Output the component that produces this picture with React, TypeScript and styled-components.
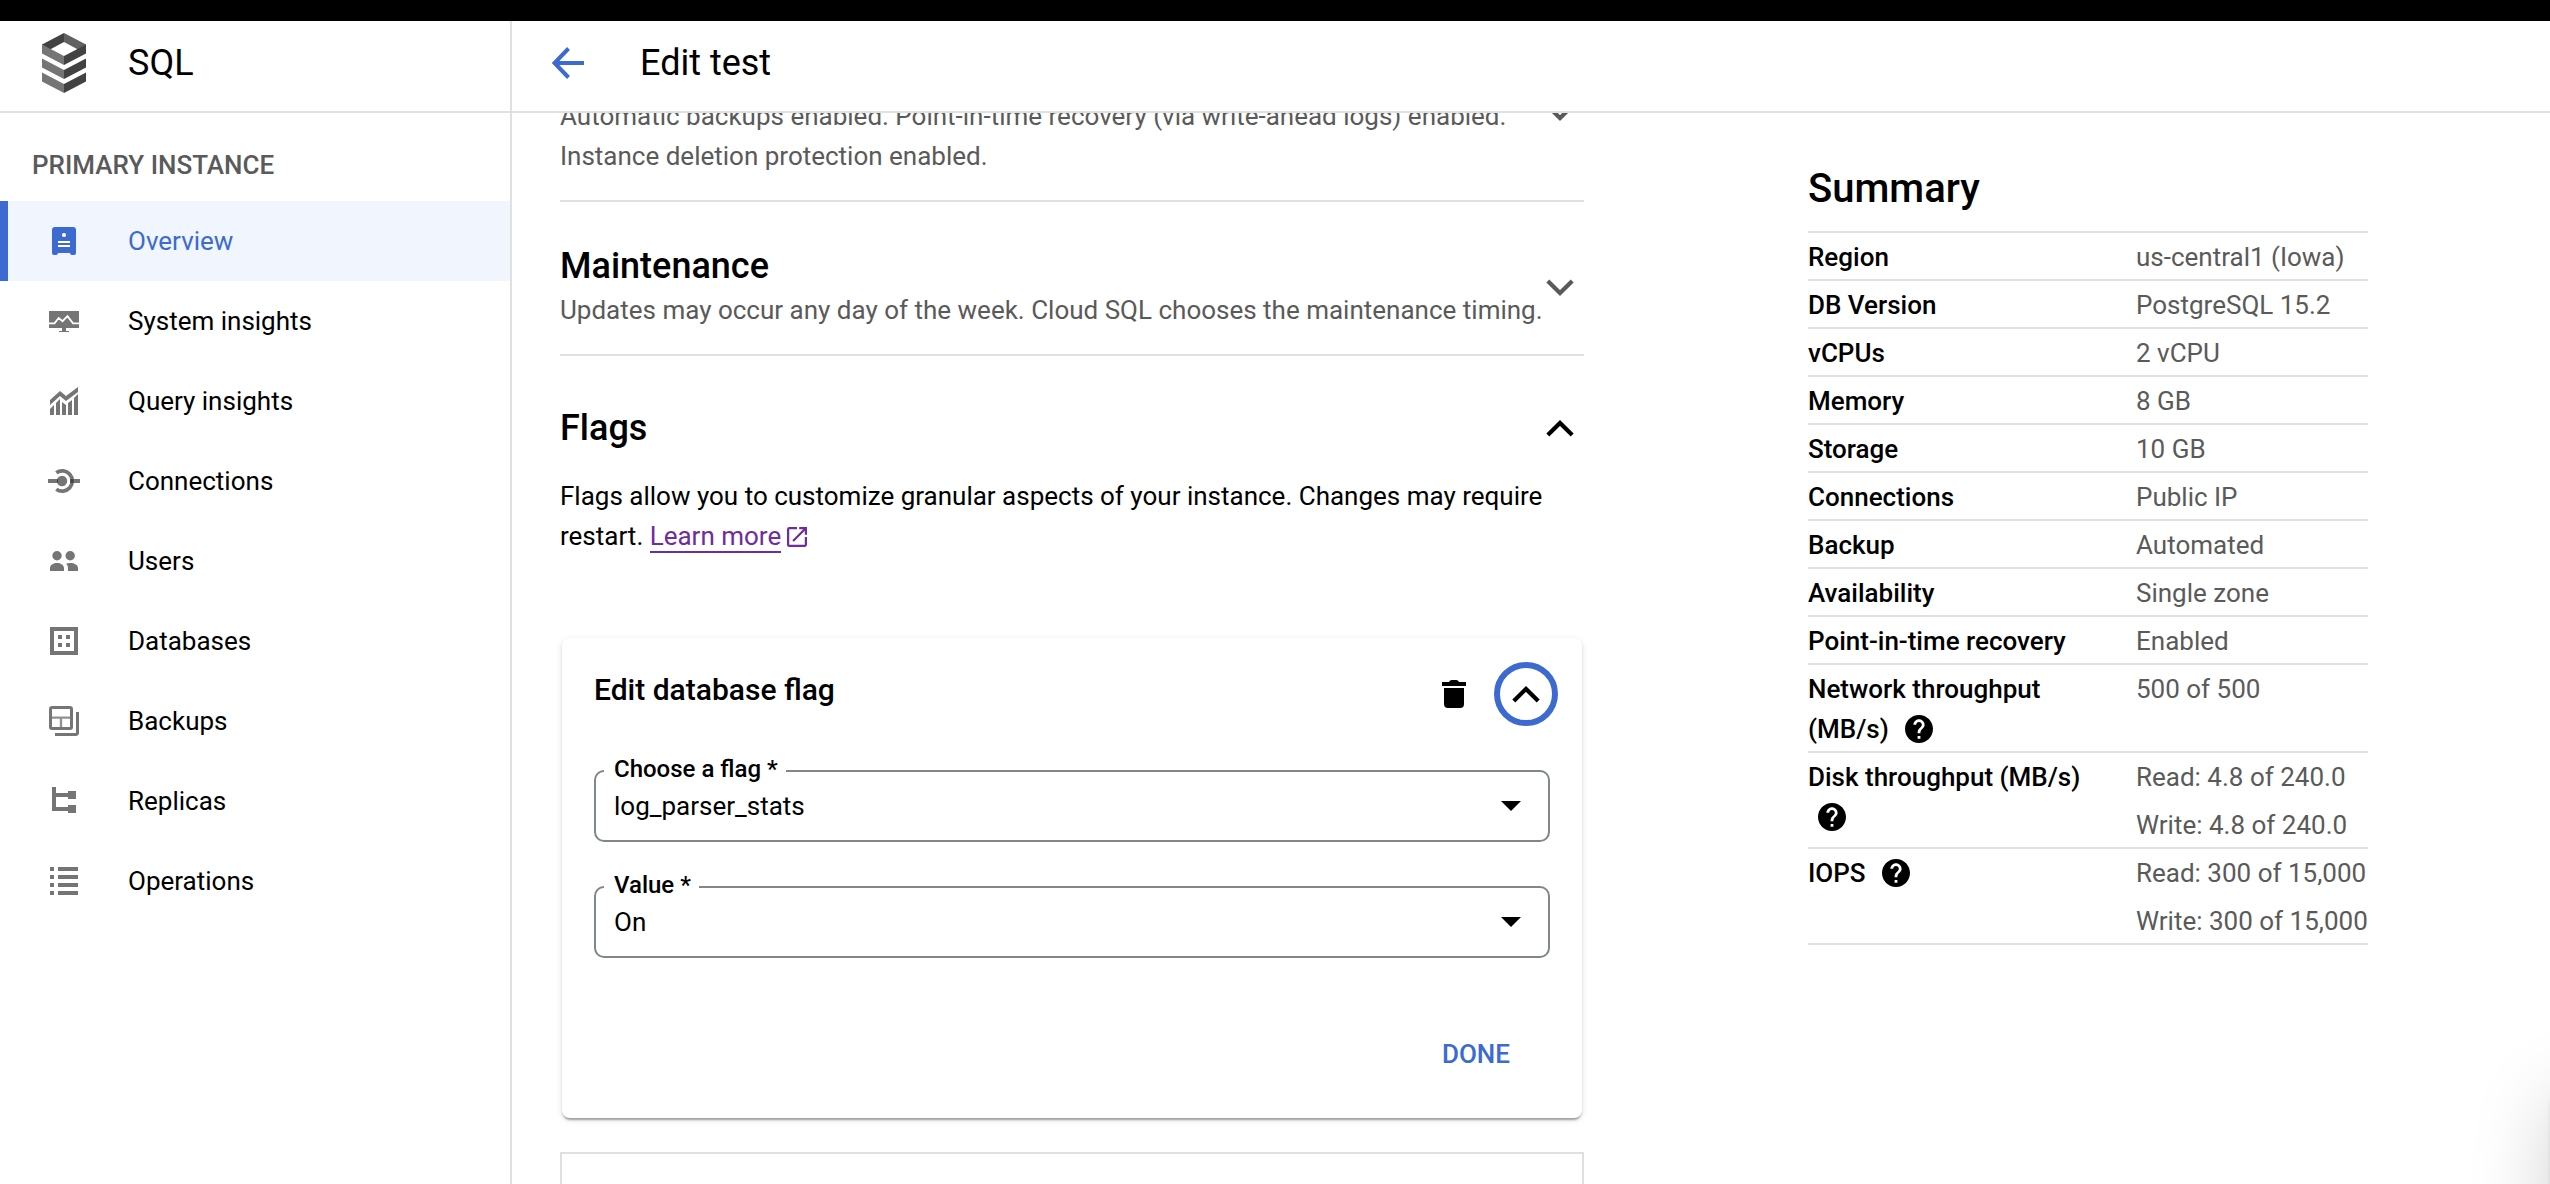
import React from "react";
import styled, { createGlobalStyle } from "styled-components";

const line = "#e0e0e0";
const blue = "#3c6ad1";
const muted = "#5a5a5a";

const GlobalStyle = createGlobalStyle`
  html, body { margin: 0; padding: 0; background: #fff; }
  * { box-sizing: border-box; }
  body { font-family: Roboto, "Liberation Sans", sans-serif; font-size: 26px; color: #000; }
`;

const Page = styled.div`
  position: relative;
  width: 2550px;
  height: 1184px;
  overflow: hidden;
  display: flex;
  flex-direction: column;
  background: #fff;
`;
const TopStrip = styled.div`
  flex: none;
  height: 21px;
  background: #000;
`;
const Shell = styled.div`
  flex: 1;
  min-height: 0;
  display: flex;
`;
const Sidebar = styled.nav`
  flex: none;
  width: 512px;
  border-right: 2px solid ${line};
`;
const Header = styled.header`
  height: 92px;
  border-bottom: 2px solid ${line};
  display: flex;
  align-items: center;
  padding-bottom: 6px;
`;
const ProductHeader = styled(Header)`
  padding-left: 42px;
  gap: 42px;
`;
const PageHeader = styled(Header)`
  flex: none;
  padding-left: 40px;
  gap: 56px;
`;
const HeaderTitle = styled.h1`
  margin: 0;
  font-size: 36px;
  line-height: 48px;
  font-weight: 400;
`;
const GroupLabel = styled.div`
  padding: 32px 0 16px 32px;
  line-height: 40px;
  font-weight: 500;
  color: ${muted};
`;
const NavItem = styled.a<{ $active?: boolean }>`
  display: flex;
  align-items: center;
  gap: 48px;
  height: 80px;
  padding-left: ${(p) => (p.$active ? 40 : 48)}px;
  border-left: ${(p) => (p.$active ? `8px solid ${blue}` : "none")};
  background: ${(p) => (p.$active ? "#f0f5fe" : "transparent")};
  color: ${(p) => (p.$active ? blue : "#000")};
  line-height: 40px;
  svg { color: ${(p) => (p.$active ? blue : "#757575")}; }
`;
const Main = styled.main`
  flex: 1;
  min-width: 0;
  display: flex;
  flex-direction: column;
`;
const Body = styled.div`
  flex: 1;
  min-height: 0;
  overflow: hidden;
  display: flex;
  align-items: flex-start;
  padding-left: 48px;
`;
const Form = styled.div`
  width: 1024px;
  margin-right: 224px;
`;
const Section = styled.section`
  display: flex;
  justify-content: space-between;
  align-items: center;
  height: 154px;
  padding: 16px 10px 0 0;
  border-bottom: 2px solid ${line};
`;
const BackupSection = styled(Section)`
  margin-top: -65px;
  padding-top: 48px;
  align-items: flex-start;
`;
const SectionTitle = styled.h2`
  margin: 0;
  font-size: 36px;
  line-height: 48px;
  font-weight: 500;
`;
const Muted = styled.div`
  color: ${muted};
  line-height: 40px;
  white-space: pre;
`;
const ChevronSlot = styled.div<{ $tone?: string; $drop?: number }>`
  display: flex;
  margin-top: ${(p) => p.$drop ?? 0}px;
  color: ${(p) => p.$tone ?? "#000"};
`;
const FlagsHead = styled.div`
  display: flex;
  justify-content: space-between;
  align-items: center;
  padding: 48px 10px 0 0;
`;
const Description = styled.p`
  margin: 24px 0 0;
  line-height: 40px;
  white-space: pre-line;
`;
const Link = styled.a`
  color: #6e2c9e;
  svg { margin-left: 6px; vertical-align: -2px; }
`;
const LinkText = styled.span`
  border-bottom: 2px solid #6e2c9e;
`;
const Card = styled.div`
  margin: 82px 2px 0;
  height: 480px;
  padding: 0 32px;
  border-radius: 8px;
  background: #fff;
  box-shadow: 0 4px 2px -2px rgba(0, 0, 0, 0.2), 0 2px 2px 0 rgba(0, 0, 0, 0.14), 0 2px 6px 0 rgba(0, 0, 0, 0.12);
`;
const CardHead = styled.div`
  display: flex;
  align-items: flex-start;
  height: 117px;
  padding-top: 24px;
`;
const CardTitle = styled.h3`
  flex: 1;
  margin: 8px 0 0;
  font-size: 30px;
  line-height: 40px;
  font-weight: 500;
`;
const TrashButton = styled.button`
  display: flex;
  margin: 18px 28px 0 0;
  padding: 0;
  border: 0;
  background: none;
`;
const RoundButton = styled.button`
  display: grid;
  place-items: center;
  width: 64px;
  height: 64px;
  margin: 0 -8px 0 0;
  padding: 0;
  border: 6px solid ${blue};
  border-radius: 50%;
  background: #fff;
  color: #000;
`;
const Field = styled.fieldset`
  display: flex;
  align-items: center;
  justify-content: space-between;
  min-width: 0;
  height: 87px;
  margin: 0 0 29px;
  padding: 0 27px 15px 18px;
  border: 2px solid #80868b;
  border-radius: 10px;
`;
const Legend = styled.legend`
  height: 32px;
  margin-left: -10px;
  padding: 0 8px 0 10px;
  font-size: 24px;
  line-height: 28px;
  font-weight: 500;
`;
const FieldValue = styled.span`
  line-height: 40px;
`;
const CardActions = styled.div`
  display: flex;
  justify-content: flex-end;
  padding: 35px 40px 0 0;
`;
const DoneButton = styled.button`
  padding: 0;
  border: 0;
  background: none;
  font: 500 26px/64px Roboto, "Liberation Sans", sans-serif;
  color: ${blue};
`;
const NextBox = styled.div`
  height: 120px;
  margin-top: 34px;
  border: 2px solid ${line};
`;
const Summary = styled.aside`
  width: 560px;
  padding-top: 48px;
`;
const SummaryTitle = styled.h2`
  margin: 0;
  height: 72px;
  border-bottom: 2px solid ${line};
  font-size: 40px;
  line-height: 56px;
  font-weight: 500;
`;
const SummaryRow = styled.div`
  display: grid;
  grid-template-columns: 328px 1fr;
  border-bottom: 2px solid ${line};
`;
const Term = styled.div`
  padding: 4px 40px 2px 0;
  line-height: 40px;
  font-weight: 500;
  white-space: nowrap;
  svg { margin-left: 10px; vertical-align: -5px; }
`;
const Values = styled.div`
  display: flex;
  flex-direction: column;
  gap: 8px;
  padding: 4px 0 2px;
  line-height: 40px;
  color: ${muted};
  white-space: nowrap;
`;
/* Drawer parked beyond the right edge: only its shadow reaches the page. */
const DrawerShadow = styled.div`
  position: absolute;
  left: 2550px;
  top: 1090px;
  width: 400px;
  height: 600px;
  border-radius: 16px;
  box-shadow: 0 10px 80px rgba(0, 0, 0, 0.18), 0 0 4px rgba(0, 0, 0, 0.08);
`;

const Chevron = ({ up }: { up?: boolean }) => (
  <svg width="28" height="18" viewBox="0 0 28 18" fill="none" stroke="currentColor" strokeWidth="4.2">
    <path d={up ? "M1.8 16 14 3.9 26.2 16" : "M1.8 2 14 14.1 26.2 2"} />
  </svg>
);
const Caret = () => (
  <svg width="20" height="10" viewBox="0 0 20 10"><path d="M0 0h20L10 10z" /></svg>
);
const Help = () => (
  <svg width="28" height="28" viewBox="2 2 20 20">
    <path d="M12 2C6.48 2 2 6.48 2 12s4.48 10 10 10 10-4.48 10-10S17.52 2 12 2zm1 17h-2v-2h2v2zm2.07-7.75-.9.92C13.45 12.9 13 13.5 13 15h-2v-.5c0-1.1.45-2.1 1.17-2.83l1.24-1.26c.37-.36.59-.86.59-1.41 0-1.1-.9-2-2-2s-2 .9-2 2H8c0-2.21 1.79-4 4-4s4 1.79 4 4c0 .88-.36 1.68-.93 2.25z" />
  </svg>
);
const Logo = () => (
  <svg width="44" height="60" viewBox="0 0 44 60">
    <path fill="#424242" d="M0 11.5 22 0v9L8 16.5 0 12z" />
    <path fill="#616161" d="M44 11.5 22 0v9l14 7.5 8-4.5z" />
    <path fill="#757575" d="M0 11.5 22 23v9L0 20.5zM0 25.5 22 37v9L0 34.5zM0 39.5 22 51v9L0 48.5z" />
    <path fill="#424242" d="M44 11.5 22 23v9l22-11.5zM44 25.5 22 37v9l22-11.5zM44 39.5 22 51v9l22-11.5z" />
  </svg>
);

/* Sidebar icons share a 32px grid. */
const icons: Record<string, React.ReactNode> = {
  Overview: (
    <>
      <path fill="currentColor" d="M7 2h18a3 3 0 0 1 3 3v23a2 2 0 0 1-2 2h-2a2 2 0 0 1-2-2H10a2 2 0 0 1-2 2H6a2 2 0 0 1-2-2V5a3 3 0 0 1 3-3z" />
      <path fill="#fff" d="M10 16h12v2H10zM10 20h12v2H10z" />
      <circle cx="16" cy="10" r="2.1" fill="#fff" />
    </>
  ),
  "System insights": (
    <>
      <path fill="currentColor" d="M1 6h30v17H18v3h3v1H11v-1h3v-3H1z" />
      <path fill="none" stroke="#fff" strokeWidth="1.8" d="M1 18.3h5.500l4.200-5.300 3.800 3.200 5-5 5.500 7.100h6" />
    </>
  ),
  "Query insights": (
    <path fill="currentColor" d="M2 15 12 6l6 5L30 2v5L18 16l-6-5L2 20zM2 24l4-4v10H2zM8 18l4-4v16H8zM14 17l4 3v10h-4zM20 18l4-3v15h-4zM26 13l4-4v21h-4z" />
  ),
  Connections: (
    <>
      <path stroke="currentColor" strokeWidth="4" d="M0 16h14M24 16h8" />
      <circle cx="14" cy="16" r="5.2" fill="currentColor" />
      <path fill="none" stroke="currentColor" strokeWidth="3.8" d="M8.3 7.8A10.1 10.1 0 1 1 8.3 24.2" />
      <path stroke="#424242" strokeWidth="4" d="M22.3 16h3.200M9 16h1" />
    </>
  ),
  Users: (
    <>
      <circle cx="9" cy="10.7" r="4.7" fill="currentColor" />
      <circle cx="22.2" cy="10.7" r="4.7" fill="currentColor" />
      <path fill="currentColor" d="M2 26v-3c0-3 3.500-5 7-5s7 2 7 5v3zM18 18.800c1.200-.5 2.700-.8 4.200-.8 4 0 7.800 2 7.800 5v3H20v-3c0-1.800-.8-3.200-2-4.200z" />
    </>
  ),
  Databases: (
    <path fill="currentColor" fillRule="evenodd" d="M2 2h28v28H2zM6 6v20h20V6zM10 10h4v4h-4zM18 10h4v4h-4zM10 18h4v4h-4zM18 18h4v4h-4z" />
  ),
  Backups: (
    <g fill="none" stroke="currentColor" strokeWidth="3">
      <rect x="2.5" y="2.5" width="21" height="21" rx="1.5" />
      <path d="M29.5 7v21a1.500 1.500 0 0 1-1.500 1.500H7" />
      <path opacity=".8" strokeWidth="2.4" d="M3 12.600h20M13 13v10" />
    </g>
  ),
  Replicas: (
    <path fill="currentColor" d="M4 2h4v6h12V6h8v8h-8v-2H8v10h12v-2h8v8h-8v-2H4z" />
  ),
  Operations: (
    <path fill="currentColor" d="M2 2h4v4H2zM2 10h4v4H2zM2 18h4v4H2zM2 26h4v4H2zM10 2h20v4H10zM10 10h20v4H10zM10 18h20v4H10zM10 26h20v4H10z" />
  ),
};

const summary: { term: string; second?: string; help?: boolean; wrapHelp?: boolean; values: string[] }[] = [
  { term: "Region", values: ["us-central1 (Iowa)"] },
  { term: "DB Version", values: ["PostgreSQL 15.2"] },
  { term: "vCPUs", values: ["2 vCPU"] },
  { term: "Memory", values: ["8 GB"] },
  { term: "Storage", values: ["10 GB"] },
  { term: "Connections", values: ["Public IP"] },
  { term: "Backup", values: ["Automated"] },
  { term: "Availability", values: ["Single zone"] },
  { term: "Point-in-time recovery", values: ["Enabled"] },
  { term: "Network throughput", second: "(MB/s) ", help: true, values: ["500 of 500"] },
  { term: "Disk throughput (MB/s)", wrapHelp: true, help: true, values: ["Read: 4.8 of 240.0", "Write: 4.8 of 240.0"] },
  { term: "IOPS ", help: true, values: ["Read: 300 of 15,000", "Write: 300 of 15,000"] },
];

const Select = ({ label, value }: { label: string; value: string }) => (
  <Field>
    <Legend>{label}</Legend>
    <FieldValue>{value}</FieldValue>
    <Caret />
  </Field>
);

export default function App() {
  return (
    <Page>
      <GlobalStyle />
      <TopStrip />
      <Shell>
        <Sidebar>
          <ProductHeader>
            <Logo />
            <HeaderTitle>SQL</HeaderTitle>
          </ProductHeader>
          <GroupLabel>PRIMARY INSTANCE</GroupLabel>
          {Object.keys(icons).map((name) => (
            <NavItem key={name} $active={name === "Overview"}>
              <svg width="32" height="32" viewBox="0 0 32 32">{icons[name]}</svg>
              {name}
            </NavItem>
          ))}
        </Sidebar>
        <Main>
          <PageHeader>
            <svg width="32" height="32" viewBox="0 0 32 32" fill="none" stroke={blue} strokeWidth="4">
              <path d="M32 16H3M16.5 1.5 2.5 16l14 14.5" />
            </svg>
            <HeaderTitle>Edit test</HeaderTitle>
          </PageHeader>
          <Body>
            <Form>
              <BackupSection>
                <Muted>{"Automatic backups enabled. Point-in-time recovery (via write-ahead logs) enabled.\nInstance deletion protection enabled."}</Muted>
                <ChevronSlot $tone={muted} $drop={8}><Chevron /></ChevronSlot>
              </BackupSection>
              <Section>
                <div>
                  <SectionTitle>Maintenance</SectionTitle>
                  <Muted>Updates may occur any day of the week. Cloud SQL chooses the maintenance timing.</Muted>
                </div>
                <ChevronSlot $tone={muted} $drop={4}><Chevron /></ChevronSlot>
              </Section>
              <FlagsHead>
                <SectionTitle>Flags</SectionTitle>
                <ChevronSlot><Chevron up /></ChevronSlot>
              </FlagsHead>
              <Description>
                {"Flags allow you to customize granular aspects of your instance. Changes may require\nrestart. "}
                <Link>
                  <LinkText>Learn more</LinkText>
                  <svg width="20" height="20" viewBox="3 3 18 18" fill="#6e2c9e">
                    <path d="M19 19H5V5h7V3H5a2 2 0 0 0-2 2v14a2 2 0 0 0 2 2h14c1.100 0 2-.9 2-2v-7h-2v7zM14 3v2h3.590l-9.830 9.830 1.410 1.410L19 6.410V10h2V3h-7z" />
                  </svg>
                </Link>
              </Description>
              <Card>
                <CardHead>
                  <CardTitle>Edit database flag</CardTitle>
                  <TrashButton>
                    <svg width="24" height="28" viewBox="0 0 24 28">
                      <path d="M0 2h7c.5-1.300 1.500-2 3-2h4c1.500 0 2.500.7 3 2h7v4H0zM2 8h20v16a4 4 0 0 1-4 4H6a4 4 0 0 1-4-4z" />
                    </svg>
                  </TrashButton>
                  <RoundButton><Chevron up /></RoundButton>
                </CardHead>
                <Select label="Choose a flag *" value="log_parser_stats" />
                <Select label="Value *" value="On" />
                <CardActions><DoneButton>DONE</DoneButton></CardActions>
              </Card>
              <NextBox />
            </Form>
            <Summary>
              <SummaryTitle>Summary</SummaryTitle>
              {summary.map((row) => (
                <SummaryRow key={row.term}>
                  <Term>
                    {row.term}
                    {(row.second || row.wrapHelp) && <br />}
                    {row.second}
                    {row.help && <Help />}
                  </Term>
                  <Values>{row.values.map((v) => <span key={v}>{v}</span>)}</Values>
                </SummaryRow>
              ))}
            </Summary>
          </Body>
        </Main>
      </Shell>
      <DrawerShadow />
    </Page>
  );
}
